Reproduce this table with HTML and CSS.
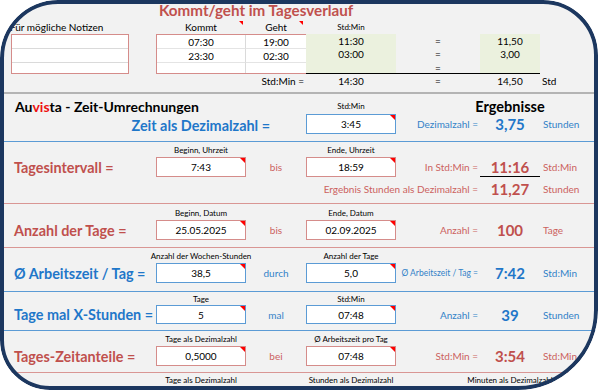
FILE: index.html
```html
<!DOCTYPE html>
<html lang="de">
<head>
<meta charset="utf-8">
<title>Auvista - Zeit-Umrechnungen</title>
<link rel="stylesheet" href="styles.css">
</head>
<body>
<div class="frame">

  <section class="sec s1">
    <div class="cell title">Kommt/geht im Tagesverlauf</div>
    <div class="cell hdr notes-h">Für mögliche Notizen</div>
    <div class="cell hdr ctr kommt-h">Kommt<span class="tri"></span></div>
    <div class="cell hdr ctr geht-h">Geht<span class="tri"></span></div>
    <div class="cell tiny ctr std-h">Std:Min</div>
    <div class="notes"><div></div><div></div><div></div></div>
    <div class="kg">
      <div>07:30</div><div>19:00</div>
      <div>23:30</div><div>02:30</div>
      <div></div><div></div>
    </div>
    <div class="green gd"><div>11:30</div><div>03:00</div><div></div></div>
    <div class="eqs"><div>=</div><div>=</div><div>=</div></div>
    <div class="green gf"><div>11,50</div><div>3,00</div><div></div></div>
    <div class="sumline"></div>
    <div class="cell tot tot-l">Std:Min =</div>
    <div class="cell tot ctr tot-d">14:30</div>
    <div class="cell tot ctr tot-e">=</div>
    <div class="cell tot ctr tot-f">14,50</div>
    <div class="cell tot tot-g">Std</div>
  </section>

  <section class="sec s2 line-blue">
    <div class="cell brand">Au<span class="vis">vis</span>ta - Zeit-Umrechnungen</div>
    <div class="cell tiny ctr d r1">Std:Min</div>
    <div class="cell ergebnisse ctr f r1">Ergebnisse</div>
    <div class="cell head blue-t zeit">Zeit als Dezimalzahl =</div>
    <div class="box blue-b d r2">3:45</div>
    <div class="cell small blue-s rt e r2">Dezimalzahl =</div>
    <div class="cell val blue-t ctr f r2">3,75</div>
    <div class="cell small blue-s unit g r2">Stunden</div>
  </section>

  <section class="sec s3 line-red">
    <div class="cell tiny ctr b r1">Beginn, Uhrzeit</div>
    <div class="cell tiny ctr d r1">Ende, Uhrzeit</div>
    <div class="cell head red-t lbl a r2">Tagesintervall =</div>
    <div class="box red-b b r2">7:43</div>
    <div class="cell small red-s ctr c r2">bis</div>
    <div class="box red-b d r2">18:59</div>
    <div class="cell small red-s rt e r2">In Std:Min =</div>
    <div class="cell val red-t ctr f r2 underline">11:16</div>
    <div class="cell small red-s unit g r2">Std:Min</div>
    <div class="cell small red-s rt de r3">Ergebnis Stunden als Dezimalzahl =</div>
    <div class="cell val red-t ctr f r3">11,27</div>
    <div class="cell small red-s unit g r3">Stunden</div>
  </section>

  <section class="sec s4 line-red">
    <div class="cell tiny ctr b r1">Beginn, Datum</div>
    <div class="cell tiny ctr d r1">Ende, Datum</div>
    <div class="cell head red-t lbl a r2">Anzahl der Tage =</div>
    <div class="box red-b b r2">25.05.2025</div>
    <div class="cell small red-s ctr c r2">bis</div>
    <div class="box red-b d r2">02.09.2025</div>
    <div class="cell small red-s rt e r2">Anzahl =</div>
    <div class="cell val red-t ctr f r2">100</div>
    <div class="cell small red-s unit g r2">Tage</div>
  </section>

  <section class="sec s5 line-blue">
    <div class="cell tiny ctr b r1">Anzahl der Wochen-Stunden</div>
    <div class="cell tiny ctr d r1">Anzahl der Tage</div>
    <div class="cell head blue-t lbl a r2 narrow">Ø Arbeitszeit / Tag =</div>
    <div class="box blue-b b r2">38,5</div>
    <div class="cell small blue-s ctr c r2">durch</div>
    <div class="box blue-b d r2">5,0</div>
    <div class="cell xsmall blue-s rt e r2">Ø Arbeitszeit / Tag =</div>
    <div class="cell val blue-t ctr f r2">7:42</div>
    <div class="cell small blue-s unit g r2">Std:Min</div>
  </section>

  <section class="sec s6 line-blue">
    <div class="cell tiny ctr b r1">Tage</div>
    <div class="cell tiny ctr d r1">Std:Min</div>
    <div class="cell head blue-t lbl a r2">Tage mal X-Stunden =</div>
    <div class="box blue-b b r2">5</div>
    <div class="cell small blue-s ctr c r2">mal</div>
    <div class="box blue-b d r2">07:48</div>
    <div class="cell small blue-s rt e r2">Anzahl =</div>
    <div class="cell val blue-t ctr f r2">39</div>
    <div class="cell small blue-s unit g r2">Stunden</div>
  </section>

  <section class="sec s7 line-red">
    <div class="cell tiny ctr b r1">Tage als Dezimalzahl</div>
    <div class="cell tiny ctr d r1">Ø Arbeitszeit pro Tag</div>
    <div class="cell head red-t lbl a r2">Tages-Zeitanteile =</div>
    <div class="box red-b b r2">0,5000</div>
    <div class="cell small red-s ctr c r2">bei</div>
    <div class="box red-b d r2">07:48</div>
    <div class="cell small red-s rt e r2">Std:Min =</div>
    <div class="cell val red-t ctr f r2">3:54</div>
    <div class="cell small red-s unit g r2">Std:Min</div>
  </section>

  <section class="sec s8">
    <div class="cell tiny ctr b r1">Tage als Dezimalzahl</div>
    <div class="cell tiny ctr d r1">Stunden als Dezimalzahl</div>
    <div class="cell tiny ctr f r1">Minuten als Dezimalzahl</div>
  </section>

</div>
</body>
</html>
```

FILE: styles.css
```css
html, body {
  margin: 0;
  padding: 0;
  background: #ffffff;
}

.frame {
  position: relative;
  width: 598px;
  height: 390px;
  background: #f2f2f2;
  border-radius: 58px 55px 80px 50px;
  overflow: hidden;
  font-family: Lato, "Open Sans", sans-serif;
  color: #000;
}

.frame::after {
  content: "";
  position: absolute;
  inset: 0;
  border: 4px solid #1c375f;
  border-radius: inherit;
  pointer-events: none;
}

.sec {
  display: grid;
  grid-template-columns: 156px 90px 60px 90px 84px 60px 1fr;
}

.line-blue { border-bottom: 1px solid #5b9bd5; }
.line-red { border-bottom: 1px solid #d99694; }

.cell {
  display: flex;
  align-items: center;
  white-space: nowrap;
  min-width: 0;
}
.ctr { justify-content: center; }
.rt { justify-content: flex-end; padding-right: 2px; }

.a { grid-column: 1; }
.b { grid-column: 2; }
.c { grid-column: 3; }
.d { grid-column: 4; }
.e { grid-column: 5; }
.f { grid-column: 6; }
.g { grid-column: 7; }
.de { grid-column: 4 / 6; }
.r1 { grid-row: 1; }
.r2 { grid-row: 2; }
.r3 { grid-row: 3; }

.tiny { font-size: 8px; }
.small { font-size: 10px; }
.xsmall { font-size: 8.5px; }
.head { font-size: 14.4px; font-weight: 700; }
.head.narrow { font-size: 14.4px; }
.val { font-size: 15px; font-weight: 700; }
.unit { padding-left: 3px; }
.lbl { padding-left: 14px; }

.red-t { color: #c0504d; }
.red-s { color: #cc625f; }
.blue-t { color: #1f77c9; }
.blue-s { color: #3282c8; }

.box {
  position: relative;
  display: flex;
  align-items: center;
  justify-content: center;
  box-sizing: border-box;
  height: 20px;
  align-self: center;
  background: #ffffff;
  border: 1px solid #d58c8a;
  font-size: 10px;
}
.box.blue-b { border-color: #5b9bd5; }
.box::after,
.tri {
  content: "";
  position: absolute;
  top: 0;
  right: 0;
  width: 0;
  height: 0;
  border-style: solid;
  border-width: 0 5px 5px 0;
  border-color: transparent #ff0000 transparent transparent;
}

.underline { border-bottom: 1px solid #000; box-sizing: border-box; }

/* Section 1 : Kommt / geht */
.s1 {
  grid-template-rows: 20px 14px 13px 14px 13px 14px;
  padding-bottom: 4px;
  border-bottom: 2px solid #b4b4b4;
}
.title {
  grid-column: 2 / 5;
  grid-row: 1;
  padding-left: 3px;
  font-size: 15.2px;
  font-weight: 700;
  color: #c0504d;
}
.hdr { font-size: 10px; grid-row: 2; position: relative; }
.hdr .tri { top: 1px; right: 3px; border-width: 0 4px 4px 0; }
.notes-h { grid-column: 1; padding-left: 10px; }
.kommt-h { grid-column: 2; }
.geht-h { grid-column: 3; }
.std-h { grid-column: 4; grid-row: 2; }

.notes {
  grid-column: 1;
  grid-row: 3 / 6;
  margin-left: 11px;
  width: 118px;
  box-sizing: border-box;
  border: 1px solid #d58c8a;
  background: #fff;
  display: grid;
  grid-template-rows: 13px 14px 1fr;
}
.notes > div + div { border-top: 1px solid #dadada; }

.kg {
  grid-column: 2 / 4;
  grid-row: 3 / 6;
  margin-right: -1px;
  box-sizing: border-box;
  border: 1px solid #d58c8a;
  background: #fff;
  display: grid;
  grid-template-columns: 89px 1fr;
  grid-template-rows: 13px 14px 1fr;
  font-size: 10px;
}
.kg > div {
  display: flex;
  align-items: center;
  justify-content: center;
}
.kg > div:nth-child(odd) { border-right: 1px solid #dadada; }
.kg > div:nth-child(n+3) { border-top: 1px solid #e4e4e4; }

.green {
  grid-row: 3 / 6;
  background: #ebf1de;
  display: grid;
  grid-template-rows: 13px 14px 1fr;
  font-size: 10px;
}
.green > div,
.eqs > div {
  display: flex;
  align-items: center;
  justify-content: center;
}
.gd { grid-column: 4; }
.gf { grid-column: 6; }
.eqs {
  grid-column: 5;
  grid-row: 3 / 6;
  display: grid;
  grid-template-rows: 13px 14px 1fr;
  font-size: 10px;
}
.sumline {
  grid-column: 4 / 7;
  grid-row: 3 / 6;
  border-bottom: 1px solid #000;
}
.tot { grid-row: 6; font-size: 10px; }
.tot-l { grid-column: 1 / 4; justify-content: flex-end; padding-right: 2px; }
.tot-d { grid-column: 4; }
.tot-e { grid-column: 5; }
.tot-f { grid-column: 6; }
.tot-g { grid-column: 7; padding-left: 2px; }

/* Section 2 */
.s2 {
  grid-template-rows: 16px 20px;
  padding: 4px 0 7px;
}
.brand {
  grid-column: 1 / 4;
  grid-row: 1;
  padding-left: 15px;
  font-size: 14px;
  font-weight: 700;
}
.vis { color: #ee1111; }
.ergebnisse { font-size: 14.5px; font-weight: 700; }
.zeit {
  grid-column: 1 / 4;
  grid-row: 2;
  justify-content: flex-end;
  padding-right: 36px;
  padding-top: 3px;
}

/* Sections 3 - 8 */
.s3 { grid-template-rows: 14px 20px 24px; padding: 1px 0 2px; }
.s4 { grid-template-rows: 14px 20px; padding: 2px 0 7px; }
.s5 { grid-template-rows: 14px 20px; padding: 1px 0 8px; }
.s6 { grid-template-rows: 13px 19px; padding: 0 0 6px; }
.s7 { grid-template-rows: 14px 20px; padding: 1px 0 6px; }
.s8 { grid-template-rows: 14px; }
.s6 .box { height: 19px; }
```
